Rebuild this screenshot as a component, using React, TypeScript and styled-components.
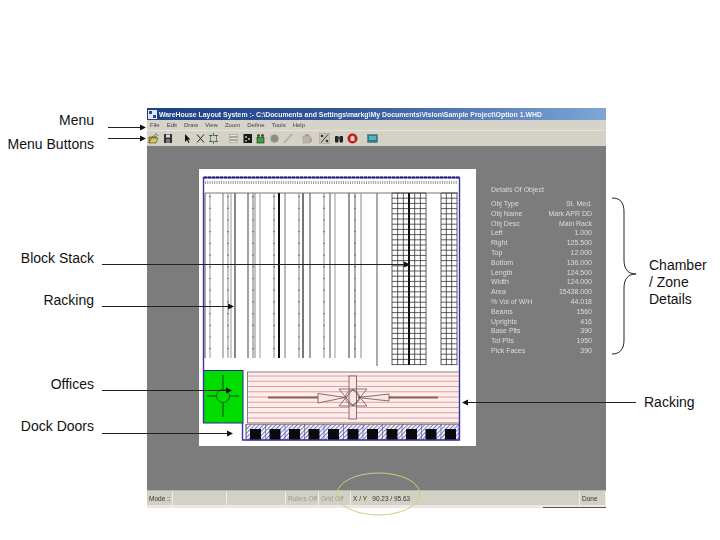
import React from 'react';
import styled, { createGlobalStyle } from 'styled-components';

const GlobalStyle = createGlobalStyle`
  html, body {
    margin: 0;
    padding: 0;
    background: #fff;
    font-family: "Liberation Sans", Arial, sans-serif;
  }
`;

const Page = styled.div`
  position: relative;
  width: 720px;
  height: 540px;
  padding: 108px 0 0 147px;
  box-sizing: border-box;
  overflow: hidden;
`;

const AppWindow = styled.div`
  width: 459px;
  height: 400px;
  display: flex;
  flex-direction: column;
  filter: blur(0.35px);
`;

const TitleBar = styled.div`
  height: 12px;
  display: flex;
  align-items: center;
  gap: 2px;
  padding-left: 1px;
  background: linear-gradient(90deg, #1f3f86 0%, #34589c 45%, #7fa6d6 100%);
  color: #f2f4f8;
  font-size: 6.9px;
  font-weight: bold;
  white-space: nowrap;
`;

const MenuBar = styled.div`
  height: 10px;
  display: flex;
  align-items: center;
  gap: 7px;
  padding-left: 3px;
  background: #d6d3c8;
  border-bottom: 1px solid #e6e4da;
  color: #444;
  font-size: 6px;
`;

const Toolbar = styled.div`
  height: 15px;
  display: flex;
  align-items: center;
  background: #d4d1c6;
`;

const ToolIcon = styled.span<{ $gap: number }>`
  display: flex;
  margin-left: ${({ $gap }) => $gap}px;
`;

const Canvas = styled.div`
  flex: 1;
  display: flex;
  align-items: flex-start;
  padding: 23px 0 0 52px;
  background: #7d7c7d;
`;

const Sheet = styled.div`
  width: 277px;
  height: 277px;
  flex-shrink: 0;
  background: #fff;
`;

const Details = styled.div`
  width: 101px;
  margin: 16px 0 0 15px;
  color: #dcdcdc;
  font-size: 7px;
`;

const DetailsTitle = styled.div`
  height: 9px;
  line-height: 9px;
  margin-bottom: 5px;
`;

const DetailRow = styled.div`
  height: 9.8px;
  line-height: 9.8px;
  display: flex;
  justify-content: space-between;
  white-space: nowrap;
`;

const StatusBar = styled.div`
  height: 15px;
  flex-shrink: 0;
  display: flex;
  background: #d3d1c4;
  border-top: 1px solid #b9b7b0;
  box-sizing: border-box;
  font-size: 6.5px;
  color: #333;
`;

const StatusCell = styled.div<{ $width?: number; $muted?: boolean }>`
  ${({ $width }) => ($width ? `width: ${$width}px;` : 'flex: 1;')}
  display: flex;
  align-items: center;
  padding-left: 2px;
  box-sizing: border-box;
  border-right: 1px solid #f0eee6;
  color: ${({ $muted }) => ($muted ? '#9a9a92' : '#333')};
  white-space: pre;
`;

const StatusFoot = styled.div`
  height: 3px;
  flex-shrink: 0;
  display: flex;
  justify-content: flex-end;
  align-items: flex-end;
  background: #e9e8e4;
`;

const FootEdge = styled.div`
  width: 63px;
  height: 1px;
  background: #555;
`;

const Callout = styled.div<{ $top: number; $left?: number; $right?: number; $width?: number }>`
  position: absolute;
  top: ${({ $top }) => $top}px;
  ${({ $left }) => ($left !== undefined ? `left: ${$left}px;` : '')}
  ${({ $right }) => ($right !== undefined ? `right: ${$right}px; text-align: right;` : '')}
  ${({ $width }) => ($width ? `width: ${$width}px;` : '')}
  color: #111;
  font-size: 14px;
  line-height: 17px;
`;

const Overlay = styled.svg`
  position: absolute;
  top: 0;
  left: 0;
  pointer-events: none;
`;

const details: [string, string][] = [
  ['Obj Type', 'St. Med.'],
  ['Obj Name', 'Mark APR DD'],
  ['Obj Desc', 'Main Rack'],
  ['Left', '1.000'],
  ['Right', '125.500'],
  ['Top', '12.000'],
  ['Bottom', '136.000'],
  ['Length', '124.500'],
  ['Width', '124.000'],
  ['Area', '15438.000'],
  ['% Vol of W/H', '44.018'],
  ['Beams', '1560'],
  ['Uprights', '416'],
  ['Base Plts', '390'],
  ['Tot Plts', '1950'],
  ['Pick Faces', '390'],
];

// x, stroke width, colour
const rackLines: [number, number, string][] = [
  [205, 1, '#555'], [210, 1.2, '#aaa'],
  [223, 1, '#777'], [228, 1.4, '#aaa'], [231, 1, '#999'], [235, 1.4, '#555'],
  [248, 1, '#444'], [253, 1, '#777'], [255, 1, '#888'], [260, 1.2, '#aaa'],
  [274, 1.2, '#999'], [279, 2, '#111'], [285, 1, '#777'],
  [299, 1.2, '#999'], [303, 2, '#777'], [310, 1, '#444'],
  [324, 1, '#888'], [330, 1, '#555'], [335, 1, '#999'],
  [349, 1, '#333'], [355, 1.6, '#999'], [361, 1, '#888'],
];

const Plan = () => {
  const doors = Array.from({ length: 11 }, (_, i) => 250 + i * 19.5);
  const stripes = Array.from({ length: 10 }, (_, i) => 376 + i * 5.25);
  const grid = (x1: number, x2: number, step: number) => {
    const out: React.ReactNode[] = [];
    for (let x = x1; x <= x2 + 0.1; x += step) {
      out.push(<line key={`v${x}`} x1={x} y1={193} x2={x} y2={365} stroke="#333" strokeWidth={0.8} />);
    }
    for (let y = 193; y <= 365; y += 5.2) {
      out.push(<line key={`h${y}`} x1={x1} y1={y} x2={x2} y2={y} stroke="#333" strokeWidth={0.8} />);
    }
    return out;
  };
  return (
    <svg width={277} height={277} viewBox="199 169 277 277">
      <defs>
        <pattern id="hatch" width="3" height="3" patternUnits="userSpaceOnUse" patternTransform="rotate(45)">
          <rect width="3" height="3" fill="#fff" />
          <rect width="1.2" height="3" fill="#7a7ad0" />
        </pattern>
      </defs>
      <line x1={205} y1={182.5} x2={458} y2={182.5} stroke="#999" strokeWidth={3} strokeDasharray="1 1.3" />
      <line x1={205} y1={193} x2={458} y2={193} stroke="#777" />
      {rackLines.map(([x, w, c]) => (
        <line key={x} x1={x} y1={193} x2={x} y2={358} stroke={c} strokeWidth={w} />
      ))}
      {[210, 228, 253, 274, 299, 324, 355].map((x) => (
        <line key={x} x1={x} y1={196} x2={x} y2={358} stroke="#555" strokeWidth={1.2} strokeDasharray="1.2 10.5" />
      ))}
      <line x1={377} y1={193} x2={377} y2={366} stroke="#555" />
      {grid(392, 426, 5.67)}
      <line x1={409} y1={193} x2={409} y2={365} stroke="#111" strokeWidth={2} />
      {grid(441, 457, 5.33)}

      <rect x={203.5} y={370.5} width={39.5} height={52.5} fill="#00dc00" stroke="#1d2a8a" />
      <line x1={223} y1={375} x2={223} y2={417} stroke="#157a15" strokeWidth={1.6} />
      <line x1={207} y1={396} x2={239} y2={396} stroke="#157a15" strokeWidth={1.6} />
      <circle cx={223} cy={396} r={6.5} fill="#00dc00" stroke="#157a15" strokeWidth={1.2} />

      <rect x={247.5} y={372} width={212} height={51} fill="#fdeeee" stroke="#666" strokeWidth={0.8} />
      {stripes.map((y) => (
        <line key={y} x1={248} y1={y} x2={459} y2={y} stroke="#e58f8f" strokeWidth={0.9} />
      ))}
      <line x1={268} y1={397.5} x2={318} y2={397.5} stroke="#8a6060" strokeWidth={2.2} />
      <line x1={389} y1={397.5} x2={438} y2={397.5} stroke="#8a6060" strokeWidth={2.2} />
      <g fill="#fbe6e6" stroke="#6a5050" strokeWidth={0.8}>
        <rect x={349} y={376} width={7.5} height={43} />
        <polygon points="318,393.5 345,397.5 318,403" />
        <polygon points="389,394 358,397.5 389,401" />
        <polygon points="339,389 367,389 353,406" fill="none" />
        <polygon points="339,406 367,406 353,389" fill="none" />
        <circle cx={352.5} cy={397.5} r={7} fill="none" />
      </g>

      <rect x={246} y={424.5} width={213} height={15.5} fill="url(#hatch)" stroke="#555" strokeWidth={0.6} />
      {doors.map((x) => (
        <g key={x}>
          <rect x={x} y={429} width={11} height={11} fill="#0a0a0a" />
          <line x1={x - 4} y1={424} x2={x - 4} y2={440} stroke="#555" strokeWidth={0.6} />
        </g>
      ))}

      <polyline
        points="203.5,423 203.5,177.5 459.5,177.5 459.5,440 242.5,440 242.5,423"
        fill="none"
        stroke="#3c32a8"
        strokeWidth={1.4}
      />
      <line x1={204} y1={177.5} x2={459} y2={177.5} stroke="#22207a" strokeWidth={2} strokeDasharray="3 1" />
    </svg>
  );
};

const icons: { gap: number; w: number; draw: React.ReactNode }[] = [
  {
    gap: 1,
    w: 11,
    draw: (
      <>
        <path d="M1 4h3l1-1h3v2H3L1 10z" fill="#c9b040" stroke="#443" strokeWidth={0.6} />
        <path d="M1 10l2-5h7l-2 5z" fill="#d8c850" stroke="#443" strokeWidth={0.6} />
        <path d="M7 1c2 0 3 1 3 2" fill="none" stroke="#286" />
      </>
    ),
  },
  {
    gap: 4,
    w: 10,
    draw: (
      <>
        <rect x={1} y={1} width={8} height={9} fill="#333" />
        <rect x={3} y={1.5} width={4} height={3} fill="#ddd" />
        <rect x={3} y={6} width={4} height={4} fill="#777" />
      </>
    ),
  },
  { gap: 9, w: 9, draw: <path d="M3 1v8l2-2 1.500 3 1-.5L6 6.500h2.500z" fill="#111" /> },
  { gap: 5, w: 9, draw: <path d="M1 1.500l7 8M8 1.500l-7 8" stroke="#222" strokeWidth={1} fill="none" /> },
  {
    gap: 4,
    w: 9,
    draw: (
      <>
        <rect x={1.500} y={2.500} width={6} height={6} fill="none" stroke="#555" strokeWidth={0.7} />
        <path d="M0 2.500h3M0 8.500h3M6 2.500h3M6 8.500h3M4.500 0v2M4.500 9v2" stroke="#263" strokeWidth={0.8} />
      </>
    ),
  },
  {
    gap: 11,
    w: 9,
    draw: (
      <>
        <rect x={0.500} y={1.500} width={8} height={8} fill="#e6e4da" stroke="#999" strokeWidth={0.6} />
        <path d="M1 4h7M1 7h7" stroke="#444" strokeWidth={0.8} />
      </>
    ),
  },
  {
    gap: 5,
    w: 9,
    draw: (
      <>
        <rect x={0.500} y={1} width={8.500} height={9} fill="#1a1a1a" />
        <path d="M2 3h2v2H2zM5 5h2v2H5zM2 7h2v1.500H2z" fill="#8a8" />
      </>
    ),
  },
  {
    gap: 4,
    w: 9,
    draw: (
      <>
        <circle cx={2.500} cy={2.500} r={1.500} fill="#444" />
        <circle cx={6.500} cy={2.500} r={1.500} fill="#444" />
        <rect x={1} y={4.500} width={7} height={5.500} fill="#3a3" stroke="#222" strokeWidth={0.6} />
      </>
    ),
  },
  { gap: 5, w: 9, draw: <circle cx={4.500} cy={5.500} r={4} fill="#8e8e88" stroke="#aaa" strokeWidth={0.6} /> },
  { gap: 4, w: 10, draw: <path d="M1 10L9 1" stroke="#a8a69c" strokeWidth={1.2} /> },
  {
    gap: 9,
    w: 11,
    draw: (
      <>
        <rect x={1} y={3} width={7} height={7} fill="#b9b6a8" stroke="#999" strokeWidth={0.5} />
        <path d="M4 3V1M6 3V1M8 6h2M8 8h2" stroke="#a33" strokeWidth={0.7} />
      </>
    ),
  },
  {
    gap: 6,
    w: 11,
    draw: (
      <>
        <rect x={0.500} y={0.500} width={10} height={10} fill="#c8c6bb" stroke="#999" strokeWidth={0.5} />
        <path d="M2 9.500L9 1.500" stroke="#333" strokeWidth={0.9} />
        <circle cx={3} cy={3} r={1.300} fill="#333" />
        <circle cx={8} cy={8} r={1.300} fill="#333" />
      </>
    ),
  },
  {
    gap: 4,
    w: 10,
    draw: (
      <>
        <rect x={1} y={3} width={3.500} height={6.500} rx={1} fill="#222" />
        <rect x={5.500} y={3} width={3.500} height={6.500} rx={1} fill="#222" />
        <rect x={3.500} y={4} width={3} height={2} fill="#444" />
      </>
    ),
  },
  {
    gap: 3,
    w: 11,
    draw: (
      <>
        <circle cx={5.500} cy={5.500} r={5} fill="#c41c1c" />
        <path d="M3.500 8V4l2-1.500L7.500 4v4z" fill="#e8d8c8" />
      </>
    ),
  },
  {
    gap: 9,
    w: 11,
    draw: (
      <>
        <rect x={0.500} y={1.500} width={10} height={8} fill="#2a8088" stroke="#666" strokeWidth={0.5} />
        <rect x={2} y={3} width={7} height={4} fill="#5ab0c0" />
      </>
    ),
  },
];

const arrows: [number, number, number][] = [
  [108, 146, 127],
  [108, 146, 138],
  [102, 410, 264],
  [102, 234, 306],
  [102, 232, 390],
  [102, 233, 433],
];

const App: React.FC = () => (
  <Page>
    <GlobalStyle />
    <AppWindow>
      <TitleBar>
        <svg width={9} height={9} viewBox="0 0 9 9">
          <rect width={9} height={9} fill="#dfe6f2" />
          <path d="M1 1h3v3H1zM5 5h3v3H5z" fill="#2a4a90" />
        </svg>
        WareHouse Layout System :- C:\Documents and Settings\markg\My Documents\Vision\Sample Project\Option 1.WHD
      </TitleBar>
      <MenuBar>
        {['File', 'Edit', 'Draw', 'View', 'Zoom', 'Define', 'Tools', 'Help'].map((m) => (
          <span key={m}>{m}</span>
        ))}
      </MenuBar>
      <Toolbar>
        {icons.map((icon, i) => (
          <ToolIcon key={i} $gap={icon.gap}>
            <svg width={icon.w} height={11} viewBox={`0 0 ${icon.w} 11`}>
              {icon.draw}
            </svg>
          </ToolIcon>
        ))}
      </Toolbar>
      <Canvas>
        <Sheet>
          <Plan />
        </Sheet>
        <Details>
          <DetailsTitle>Details Of Object</DetailsTitle>
          {details.map(([k, v]) => (
            <DetailRow key={k}>
              <span>{k}</span>
              <span>{v}</span>
            </DetailRow>
          ))}
        </Details>
      </Canvas>
      <StatusBar>
        <StatusCell $width={26}>Mode ::</StatusCell>
        <StatusCell $width={54} />
        <StatusCell $width={59} />
        <StatusCell $width={33} $muted>Rulers Off</StatusCell>
        <StatusCell $width={32} $muted>Grid Off</StatusCell>
        <StatusCell>{'X / Y   90.23 / 95.63'}</StatusCell>
        <StatusCell $width={26}>Done</StatusCell>
      </StatusBar>
      <StatusFoot>
        <FootEdge />
      </StatusFoot>
    </AppWindow>

    <Callout $top={112} $right={626}>Menu</Callout>
    <Callout $top={136} $right={626}>Menu Buttons</Callout>
    <Callout $top={250} $right={626}>Block Stack</Callout>
    <Callout $top={292} $right={626}>Racking</Callout>
    <Callout $top={376} $right={626}>Offices</Callout>
    <Callout $top={418} $right={626}>Dock Doors</Callout>
    <Callout $top={257} $left={649} $width={64}>Chamber / Zone Details</Callout>
    <Callout $top={394} $left={644}>Racking</Callout>

    <Overlay width={720} height={540} viewBox="0 0 720 540">
      {arrows.map(([x1, x2, y]) => (
        <g key={`${x1}-${y}`}>
          <line x1={x1} y1={y + 0.5} x2={x2 - 4} y2={y + 0.5} stroke="#222" strokeWidth={1} />
          <polygon points={`${x2 - 6},${y - 2.5} ${x2},${y + 0.5} ${x2 - 6},${y + 3.5}`} fill="#111" />
        </g>
      ))}
      <line x1={466} y1={402.5} x2={636} y2={402.5} stroke="#222" strokeWidth={1} />
      <polygon points="468,399.500 462,402.500 468,405.500" fill="#111" />
      <path
        d="M612 198c8 0 12 4 12 14v48c0 9 4 14 12 14c-8 0-12 5-12 14v52c0 9-4 14-12 14"
        fill="none"
        stroke="#222"
        strokeWidth={1}
      />
      <ellipse cx={378.5} cy={494} rx={41.5} ry={21} fill="none" stroke="#c6d27e" strokeWidth={1} />
    </Overlay>
  </Page>
);

export default App;
